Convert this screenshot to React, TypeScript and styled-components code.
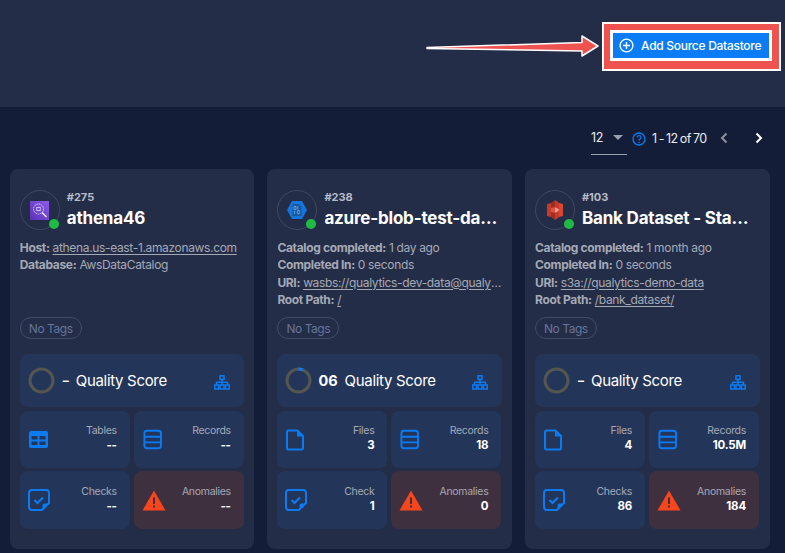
import styled, { createGlobalStyle } from 'styled-components'

const GlobalStyle = createGlobalStyle`
    html, body {
        margin: 0;
        padding: 0;
        background-color: #141d38;
        overflow: hidden;
    }
    * { box-sizing: border-box; }
`

const Page = styled.div`
    width: 785px;
    height: 553px;
    overflow: hidden;
    font-family: Inter, "Noto Sans", sans-serif;
    background-color: #141d38;
`

const Header = styled.header`
    position: relative;
    height: 107px;
    background-color: #242d47;
    display: flex;
    justify-content: flex-end;
    align-items: flex-start;
    padding: 22px 4px 0 0;
`

const ArrowMark = styled.svg`
    position: absolute;
    left: 425px;
    top: 32px;
`

const HighlightBox = styled.div`
    width: 179px;
    height: 49px;
    padding: 2px;
    background-color: #fff;
`

const HighlightRed = styled.div`
    height: 100%;
    padding: 6px 6px 7px 6px;
    background-color: #ef5350;
`

const AddButton = styled.button`
    width: 162px;
    height: 31px;
    border: 3px solid #fff;
    background-color: #0a7cf5;
    color: #fff;
    font-family: inherit;
    font-size: 12px;
    font-weight: 500;
    letter-spacing: -0.28px;
    display: flex;
    align-items: center;
    gap: 7px;
    padding: 0 0 0 6px;
`

const Pager = styled.div`
    height: 62px;
    display: flex;
    justify-content: flex-end;
    align-items: center;
    padding: 0 21px 0 0;
    color: #e8ebf2;
    font-size: 12.5px;
    letter-spacing: -0.35px;
`

const PageSelect = styled.div`
    width: 36px;
    height: 30px;
    margin-top: 4px;
    border-bottom: 1px solid #9aa0ad;
    display: flex;
    align-items: center;
    justify-content: space-between;
    padding: 0 4px 5px 0;
`

const Caret = styled.span`
    width: 0;
    height: 0;
    border-left: 5px solid transparent;
    border-right: 5px solid transparent;
    border-top: 5px solid #9aa0ad;
`

const PagerHelp = styled.svg`
    margin: 2px 6px 0 5px;
`

const PageRange = styled.span`
    width: 59px;
    letter-spacing: -0.55px;
    word-spacing: -0.8px;
    white-space: nowrap;
`

const PagerNav = styled.svg`
    margin-left: ${props => props.$gap}px;
`

const CardGrid = styled.div`
    display: grid;
    grid-template-columns: repeat(3, 244.6px);
    column-gap: 13px;
    padding-left: 9.8px;
`

const Card = styled.article`
    height: 380px;
    padding: 21px 10px 0;
    border-radius: 8px;
    background-color: #242d47;
`

const CardHead = styled.div`
    display: flex;
    gap: 7px;
    height: 40px;
`

const Avatar = styled.div`
    position: relative;
    flex: none;
    width: 40px;
    height: 40px;
    border: 1px solid #3f4860;
    border-radius: 50%;
    display: flex;
    align-items: center;
    justify-content: center;
`

const StatusDot = styled.span`
    position: absolute;
    right: 0;
    bottom: 0;
    width: 10px;
    height: 10px;
    border-radius: 50%;
    background-color: #1fbb45;
`

const HeadText = styled.div`
    min-width: 0;
    width: 175px;
`

const SourceId = styled.div`
    color: #b6bbc7;
    font-size: 11px;
    font-weight: 700;
    line-height: 14px;
`

const SourceName = styled.h3`
    margin: 3px 0 0;
    color: #fff;
    font-size: 17px;
    font-weight: 700;
    line-height: 22px;
    letter-spacing: -0.2px;
    overflow: hidden;
    white-space: nowrap;
    text-overflow: ellipsis;
`

const Details = styled.div`
    height: 70px;
    margin-top: 9px;
    color: #a4a9b6;
    font-size: 12px;
    line-height: 17.3px;
    letter-spacing: -0.34px;
`

const DetailRow = styled.div`
    overflow: hidden;
    white-space: nowrap;
    text-overflow: ellipsis;

    & > b {
        font-weight: 700;
    }

    & > u {
        text-underline-offset: 2px;
    }
`

const TagPill = styled.span`
    display: inline-flex;
    align-items: center;
    height: 22px;
    margin-top: 8px;
    padding: 0 8px;
    border: 1px solid #414c6b;
    border-radius: 11px;
    color: #66749c;
    font-size: 12px;
    letter-spacing: -0.45px;
`

const ScorePanel = styled.div`
    height: 53px;
    margin-top: 15px;
    padding: 0 14px 0 8px;
    border-radius: 8px;
    background-color: #24355a;
    display: flex;
    align-items: center;
    color: #fff;
`

const ScoreValue = styled.span`
    margin-left: ${props => (props.$empty ? 8 : 6)}px;
    font-size: ${props => (props.$empty ? 12 : 14.5)}px;
    font-weight: 700;
`

const ScoreLabel = styled.span`
    flex: 1;
    margin-left: 7px;
    font-size: 15px;
    letter-spacing: -0.32px;
`

const HierarchyIcon = styled.svg`
    margin-top: 4px;
`

const StatGrid = styled.div`
    display: grid;
    grid-template-columns: 110px 110px;
    grid-template-rows: 57px 58px;
    gap: 3px 4px;
    margin-top: 4px;
`

const StatTile = styled.div`
    padding: 0 13px 0 8px;
    border-radius: 8px;
    background-color: ${props => (props.$danger ? '#3f3040' : '#24355a')};
    display: flex;
    align-items: center;
    justify-content: space-between;

    &:nth-child(n + 3) > div {
        margin-top: -3px;
    }
`

const StatText = styled.div`
    text-align: right;
    margin-top: -4px;
`

const StatLabel = styled.div`
    color: #a4a9b6;
    font-size: 10.5px;
    line-height: 15px;
    letter-spacing: -0.3px;
`

const StatValue = styled.div`
    color: #fff;
    font-size: 11.5px;
    font-weight: 700;
    line-height: 15px;
    letter-spacing: -0.2px;
`

const BLUE = '#0c7bf2'

function TableIcon() {
    return (
        <svg width="22" height="20" viewBox="0 0 22 20">
            <rect x="1" y="1" width="19" height="17" rx="2" fill={BLUE} />
            <path d="M3.5 6h6v3.5h-6zM11.5 6h6v3.5h-6zM3.5 11.5h6V15h-6zM11.5 11.5h6V15h-6z" fill="#24355a" />
        </svg>
    )
}

function RecordsIcon() {
    return (
        <svg width="22" height="21" viewBox="0 0 22 21" fill="none" stroke={BLUE} strokeWidth="1.9">
            <rect x="2.4" y="1.8" width="16.6" height="17.4" rx="2.5" />
            <path d="M2.4 7.8H19M2.4 13.4H19" />
        </svg>
    )
}

function FileIcon() {
    return (
        <svg width="22" height="22" viewBox="0 0 22 22" fill="none" stroke={BLUE} strokeWidth="2">
            <path d="M3.5 1.5h9l5.5 5.5v12a1.5 1.5 0 0 1-1.5 1.5h-13A1.5 1.5 0 0 1 2 19V3a1.5 1.5 0 0 1 1.5-1.5z" />
            <path d="M12 1.5l6 6h-6z" fill={BLUE} stroke="none" />
        </svg>
    )
}

function CheckIcon() {
    return (
        <svg width="22" height="22" viewBox="0 0 22 22" fill="none">
            <path d="M4 1h14a3 3 0 0 1 3 3v10l-7 7H4a3 3 0 0 1-3-3V4a3 3 0 0 1 3-3z" stroke={BLUE} strokeWidth="2" />
            <path d="M21 14.5h-4.5a2 2 0 0 0-2 2V21z" fill={BLUE} />
            <path d="M6.5 11l3 3 5.5-5.5" stroke={BLUE} strokeWidth="2.2" />
        </svg>
    )
}

function WarnIcon() {
    return (
        <svg width="24" height="21" viewBox="0 0 24 21">
            <path d="M12 0.5L23.5 20.5H0.5z" fill="#f7451c" />
            <rect x="11" y="7.5" width="2" height="6.5" fill="#3f3040" />
            <rect x="11" y="15.5" width="2" height="2" fill="#3f3040" />
        </svg>
    )
}

function AthenaLogo() {
    return (
        <svg width="19" height="19" viewBox="0 0 19 19" fill="none">
            <defs>
                <linearGradient id="ath" x1="0" y1="1" x2="1" y2="0">
                    <stop offset="0" stopColor="#5a30b5" />
                    <stop offset="1" stopColor="#8a5be8" />
                </linearGradient>
            </defs>
            <rect width="19" height="19" fill="url(#ath)" />
            <circle cx="8.5" cy="8" r="5" stroke="#d9ccf7" strokeWidth="1" strokeDasharray="1.6 .7" />
            <rect x="6.8" y="6.3" width="3.4" height="3.4" stroke="#e6dcfb" strokeWidth=".8" />
            <path d="M12 11.5l4.5 4.5" stroke="#efe9fd" strokeWidth="1.4" />
        </svg>
    )
}

function BlobLogo() {
    return (
        <svg width="20" height="18" viewBox="0 0 20 18">
            <path d="M5 0h10l5 9-5 9H5L0 9z" fill="#1375dd" />
            <path d="M5.5 3h6.5l2.5 2.5V15H5.5z" fill="#17599f" />
            <path d="M7 5.5h2v3.2H7zM10.4 9.6h2v3.2h-2z" fill="none" stroke="#7cb8ef" strokeWidth=".7" />
            <path d="M10.8 5v3.5M7.6 10v3" stroke="#7cb8ef" strokeWidth=".7" />
        </svg>
    )
}

function BucketLogo() {
    return (
        <svg width="16" height="20" viewBox="0 0 16 20">
            <path d="M0 4l4-1v14l-4-1z" fill="#c8392b" />
            <path d="M16 4l-4-1v14l4-1z" fill="#d8472f" />
            <path d="M4 3l4-3 4 3v14l-4 3-4-3z" fill="#9c2f24" />
            <path d="M8 0l4 3v14l-4 3z" fill="#c8392b" />
            <path d="M4 8l4-1v6l-4-1z" fill="#e0523f" />
            <path d="M8 7.5c1.8 0 3.2.9 4 2.5-.8 1.6-2.2 2.5-4 2.5z" fill="#eb9c8f" />
        </svg>
    )
}

const statIcons = {
    table: <TableIcon />,
    records: <RecordsIcon />,
    file: <FileIcon />,
    check: <CheckIcon />,
    warn: <WarnIcon />,
}

const sources = [
    {
        id: '#275',
        name: 'athena46',
        logo: <AthenaLogo />,
        details: [
            { label: 'Host:', link: 'athena.us-east-1.amazonaws.com' },
            { label: 'Database:', text: 'AwsDataCatalog' },
        ],
        score: '–',
        progress: 0,
        stats: [
            { icon: 'table', label: 'Tables', value: '--' },
            { icon: 'records', label: 'Records', value: '--' },
            { icon: 'check', label: 'Checks', value: '--' },
            { icon: 'warn', label: 'Anomalies', value: '--' },
        ],
    },
    {
        id: '#238',
        name: 'azure-blob-test-data-store',
        logo: <BlobLogo />,
        details: [
            { label: 'Catalog completed:', text: '1 day ago' },
            { label: 'Completed In:', text: '0 seconds' },
            { label: 'URI:', link: 'wasbs://qualytics-dev-data@qualytics.blob' },
            { label: 'Root Path:', link: '/' },
        ],
        score: '06',
        progress: 6,
        stats: [
            { icon: 'file', label: 'Files', value: '3' },
            { icon: 'records', label: 'Records', value: '18' },
            { icon: 'check', label: 'Check', value: '1' },
            { icon: 'warn', label: 'Anomalies', value: '0' },
        ],
    },
    {
        id: '#103',
        name: 'Bank Dataset - Staging',
        logo: <BucketLogo />,
        details: [
            { label: 'Catalog completed:', text: '1 month ago' },
            { label: 'Completed In:', text: '0 seconds' },
            { label: 'URI:', link: 's3a://qualytics-demo-data' },
            { label: 'Root Path:', link: '/bank_dataset/' },
        ],
        score: '–',
        progress: 0,
        stats: [
            { icon: 'file', label: 'Files', value: '4' },
            { icon: 'records', label: 'Records', value: '10.5M' },
            { icon: 'check', label: 'Checks', value: '86' },
            { icon: 'warn', label: 'Anomalies', value: '184' },
        ],
    },
]

function ScoreRing({ progress }: { progress: number }) {
    const r = 11.5
    const length = 2 * Math.PI * r
    return (
        <svg width="27" height="27" viewBox="0 0 27 27" fill="none">
            <circle cx="13.5" cy="13.5" r={r} stroke="#55564f" strokeWidth="3" />
            {progress > 0 && (
                <circle
                    cx="13.5"
                    cy="13.5"
                    r={r}
                    stroke={BLUE}
                    strokeWidth="3"
                    strokeDasharray={`${(length * progress) / 100} ${length}`}
                    transform="rotate(-90 13.5 13.5)"
                />
            )}
        </svg>
    )
}

export default function App() {
    return (
        <Page>
            <GlobalStyle />
            <Header>
                <ArrowMark width="176" height="28" viewBox="0 0 176 28">
                    <path
                        d="M2 15.5L157 10.5V4L173 14L157 24V19L2 16.5z"
                        fill="#ef5350"
                        stroke="#fff"
                        strokeWidth="1.5"
                        strokeLinejoin="round"
                    />
                </ArrowMark>
                <HighlightBox>
                    <HighlightRed>
                        <AddButton>
                            <svg width="15" height="15" viewBox="0 0 15 15" fill="none" stroke="#fff" strokeWidth="1.4">
                                <circle cx="7.5" cy="7.5" r="6.4" />
                                <path d="M7.5 4v7M4 7.5h7" />
                            </svg>
                            Add Source Datastore
                        </AddButton>
                    </HighlightRed>
                </HighlightBox>
            </Header>
            <Pager>
                <PageSelect>
                    12
                    <Caret />
                </PageSelect>
                <PagerHelp width="14" height="14" viewBox="0 0 14 14" fill="none" stroke={BLUE} strokeWidth="1.3">
                    <circle cx="7" cy="7" r="6" />
                    <path d="M5.2 5.5a1.9 1.9 0 1 1 2.7 1.7c-.6.3-.9.7-.9 1.3" />
                    <path d="M7 9.8v1.1" />
                </PagerHelp>
                <PageRange>1 - 12 of 70</PageRange>
                <PagerNav $gap={8} width="10" height="12" viewBox="0 0 10 12" fill="none" stroke="#8d919c" strokeWidth="2">
                    <path d="M7.5 1.5L3 6l4.5 4.5" />
                </PagerNav>
                <PagerNav $gap={25} width="10" height="12" viewBox="0 0 10 12" fill="none" stroke="#fff" strokeWidth="2">
                    <path d="M2.5 1.5L7 6l-4.5 4.5" />
                </PagerNav>
            </Pager>
            <CardGrid>
                {sources.map(source => (
                    <Card key={source.id}>
                        <CardHead>
                            <Avatar>
                                {source.logo}
                                <StatusDot />
                            </Avatar>
                            <HeadText>
                                <SourceId>{source.id}</SourceId>
                                <SourceName>{source.name}</SourceName>
                            </HeadText>
                        </CardHead>
                        <Details>
                            {source.details.map(row => (
                                <DetailRow key={row.label}>
                                    <b>{row.label}</b> {row.link ? <u>{row.link}</u> : row.text}
                                </DetailRow>
                            ))}
                        </Details>
                        <TagPill>No Tags</TagPill>
                        <ScorePanel>
                            <ScoreRing progress={source.progress} />
                            <ScoreValue $empty={source.progress === 0}>{source.score}</ScoreValue>
                            <ScoreLabel>Quality Score</ScoreLabel>
                            <HierarchyIcon width="16" height="15" viewBox="0 0 16 15" fill="none" stroke={BLUE} strokeWidth="1.5">
                                <rect x="6" y="0.8" width="4" height="3.6" />
                                <rect x="0.8" y="10" width="3.8" height="4" />
                                <rect x="6" y="10" width="4" height="4" />
                                <rect x="11.4" y="10" width="3.8" height="4" />
                                <path d="M8 4.4V10M2.6 10V7.2h10.8V10" />
                            </HierarchyIcon>
                        </ScorePanel>
                        <StatGrid>
                            {source.stats.map(stat => (
                                <StatTile key={stat.label} $danger={stat.icon === 'warn'}>
                                    {statIcons[stat.icon]}
                                    <StatText>
                                        <StatLabel>{stat.label}</StatLabel>
                                        <StatValue>{stat.value}</StatValue>
                                    </StatText>
                                </StatTile>
                            ))}
                        </StatGrid>
                    </Card>
                ))}
            </CardGrid>
        </Page>
    )
}
